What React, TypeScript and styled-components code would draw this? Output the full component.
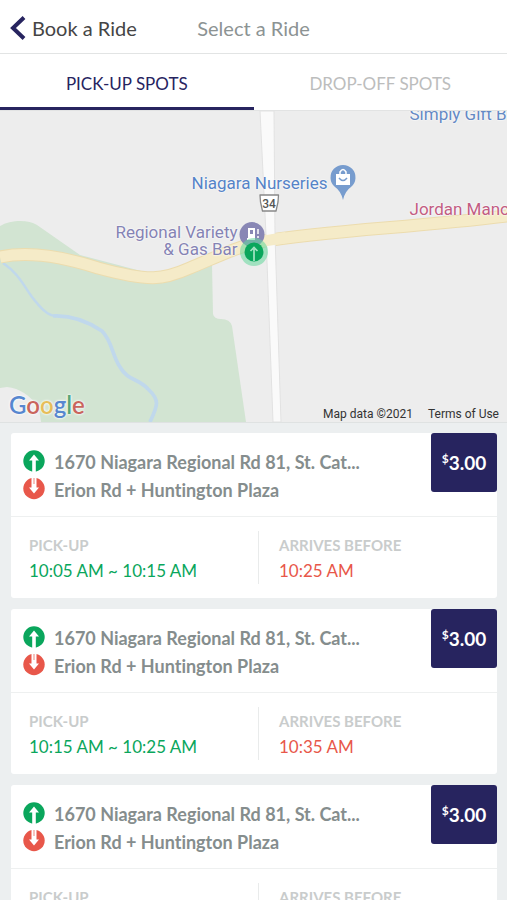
import React from "react";
import styled, { createGlobalStyle } from "styled-components";

const navy = "#27245f";
const green = "#0aa65c";
const red = "#e8574a";

const GlobalStyle = createGlobalStyle`
  * { box-sizing: border-box; }
  body {
    margin: 0;
    background: #eceff0;
    font-family: Lato, sans-serif;
    font-variant-ligatures: none;
  }
  button { font: inherit; border: 0; background: none; padding: 0; cursor: pointer; }
`;

const Screen = styled.div`
  display: flex;
  flex-direction: column;
  height: 100vh;
  overflow: hidden;
`;

const Header = styled.header`
  display: grid;
  grid-template-columns: 1fr auto 1fr;
  align-items: center;
  height: 54px;
  flex: none;
  padding: 2px 10px 0;
  background: #fff;
  border-bottom: 1px solid #e2e4e4;
`;

const BackButton = styled.button`
  display: flex;
  align-items: center;
  gap: 6px;
  justify-self: start;
  font-size: 20px;
  line-height: 28px;
  color: #454545;
`;

const Title = styled.h1`
  margin: 0;
  font-size: 20px;
  line-height: 28px;
  font-weight: 400;
  color: #8c9393;
`;

const Tabs = styled.div`
  display: flex;
  flex: none;
  background: #fff;
`;

const Tab = styled.button<{ $active?: boolean }>`
  flex: 1;
  height: 56px;
  padding-top: 6px;
  font-size: 17px;
  line-height: 24px;
  color: ${(p) => (p.$active ? navy : "#bcbdbd")};
  border-bottom: 3px solid ${(p) => (p.$active ? navy : "transparent")};
`;

const MapArea = styled.section`
  position: relative;
  height: 313px;
  flex: none;
  overflow: hidden;
  background: #ededed;
  border-top: 1px solid #e2e3e3;
  border-bottom: 1px solid #dfe2e2;
`;

const MapDrawing = styled.svg`
  display: block;
  width: 100%;
  height: 100%;
`;

const MapLabel = styled.span<{ $x: number; $y: number; $color: string; $end?: boolean }>`
  position: absolute;
  top: ${(p) => p.$y}px;
  ${(p) => (p.$end ? "right" : "left")}: calc(50% + ${(p) => p.$x}px);
  font: 17px/17px Roboto, sans-serif;
  text-align: right;
  white-space: pre-line;
  width: max-content;
  color: ${(p) => p.$color};
  text-shadow: 0 0 2px #fff, 0 0 2px #fff;
`;

const Logo = styled.span`
  position: absolute;
  left: 9px;
  bottom: 0;
  font: 600 24px/34px Lato, sans-serif;
  text-shadow: 0 0 2px #fff, 0 0 3px #fff;
`;

const Letter = styled.span<{ $color: string }>`
  color: ${(p) => p.$color};
`;

const MapFooter = styled.div`
  position: absolute;
  right: 8px;
  bottom: 0;
  display: flex;
  gap: 15px;
  font: 12px/16px Roboto, sans-serif;
  color: #333;
`;

const TermsLink = styled.a`
  color: inherit;
  text-decoration: none;
`;

const RideList = styled.main`
  display: flex;
  flex-direction: column;
  gap: 11px;
  flex: 1;
  min-height: 0;
  padding: 10px 10px 10px 11px;
  overflow-y: auto;
  scrollbar-width: none;
`;

const Card = styled.article`
  flex: none;
  background: #fff;
  border-radius: 3px;
`;

const CardTop = styled.div`
  display: flex;
  align-items: flex-start;
  justify-content: space-between;
  height: 84px;
  border-bottom: 1px solid #eef0f0;
`;

const Stops = styled.div`
  display: flex;
  flex-direction: column;
  min-width: 0;
  padding: 15px 0 0 12px;
`;

const Stop = styled.div`
  display: flex;
  align-items: center;
  gap: 9px;
  height: 28px;
  font-size: 18px;
  line-height: 28px;
  font-weight: 700;
  color: #858d8d;
  white-space: nowrap;
`;

const Price = styled.button`
  display: flex;
  align-items: center;
  justify-content: center;
  flex: none;
  width: 66px;
  height: 59px;
  border-radius: 3px;
  background: ${navy};
  color: #fff;
  font-size: 19px;
  font-weight: 700;
`;

const Currency = styled.span`
  align-self: flex-start;
  padding-top: 19px;
  font-size: 12px;
  line-height: 14px;
`;

const Times = styled.dl`
  display: grid;
  grid-template-columns: 247px 1fr;
  margin: 0;
  padding: 14px 0;
`;

const TimeCell = styled.div<{ $divided?: boolean }>`
  height: 53px;
  padding-left: ${(p) => (p.$divided ? 20 : 18)}px;
  border-left: ${(p) => (p.$divided ? "1px solid #e9ebeb" : "0")};
`;

const TimeLabel = styled.dt`
  padding-top: 2px;
  font-size: 15px;
  line-height: 24px;
  font-weight: 700;
  color: #c9cccc;
`;

const TimeValue = styled.dd<{ $color: string }>`
  margin: 0;
  font-size: 17px;
  line-height: 28px;
  color: ${(p) => p.$color};
`;

const StopIcon = ({ down }: { down?: boolean }) => (
  <svg width="22" height="28" viewBox="0 0 22 28" aria-hidden="true">
    {down ? (
      <>
        <circle cx="11" cy="12.5" r="10.7" fill={red} />
        <path d="M8.500 1h5V11.500H16L11 17.500L6 11.500H8.500z" fill="#fff" />
        <path d="M11 2v6" stroke={red} strokeWidth="1.200" opacity=".6" />
      </>
    ) : (
      <>
        <circle cx="11" cy="13" r="10.7" fill={green} />
        <path d="M9.200 24V12.500H6L11 6.500l5 6h-3.200V24z" fill="#fff" />
      </>
    )}
  </svg>
);

const MapPicture = () => (
  <MapDrawing viewBox="0 111 507 311" preserveAspectRatio="xMidYMid slice" aria-hidden="true">
    <path d="M0 226C10 220 28 219 37 225L80 255L160 276L212 264L213 314Q214 319 221 319Q230 319 232 326L246 422H41L39 408Q26 389 7 387L0 388Z" fill="#d2e4d2" />
    <path d="M3 263C18 273 24 286 32 297C39 306 47 316 56 316" fill="none" stroke="#c0d8ec" strokeWidth="2.500" />
    <path d="M53 316C72 315 90 323 102 331C112 341 112 355 120 367C128 381 138 378 148 389C160 400 158 405 150 422" fill="none" stroke="#c0d8ec" strokeWidth="3.700" strokeLinejoin="round" />
    <path d="M0 256C28 250 61 255 98 267C150 281 163 279 190 267C221 254 235 247 259 241C330 229 410 227 507 215" transform="translate(0 1)" fill="none" stroke="#ecdcae" strokeWidth="13" />
    <path d="M0 256C28 250 61 255 98 267C150 281 163 279 190 267C221 254 235 247 259 241C330 229 410 227 507 215" transform="translate(0 1)" fill="none" stroke="#f5ebc8" strokeWidth="11" />
    <path d="M260 111L266 235L273 422H281L275 235L274 111Z" fill="#fafafa" stroke="#e2e2e2" />
    <path d="M264 241L286 237.500" stroke="#f5ebc8" strokeWidth="11" />
    <path d="M260 195H278.500L278 202L276 211H262.500L260.500 202Z" fill="#fff" stroke="#888" strokeWidth="1.300" strokeLinejoin="round" />
    <text x="269" y="207.500" textAnchor="middle" fontFamily="Roboto" fontSize="12" fontWeight="500" fill="#555">34</text>
    <path d="M343 200Q341 191 335 187A12.500 12.500 0 1 1 351 187Q345 191 343 200Z" fill="#779cce" />
    <path d="M336 174H350V185H336Z" fill="#fff" />
    <path d="M340 174V172Q343 167 346 172V174" fill="none" stroke="#fff" strokeWidth="1.500" />
    <path d="M339 178Q343 183 347 178" fill="none" stroke="#779cce" strokeWidth="1.500" />
    <circle cx="252" cy="234.500" r="12.500" fill="#8987b5" />
    <path d="M248 228h7v12h-8v-2h1zM250 230v4h3v-4z" fill="#fff" fillRule="evenodd" />
    <path d="M258 229v5M258 236v2" fill="none" stroke="#fff" strokeWidth="1.500" />
    <circle cx="254" cy="252" r="14" fill="#62d79a" opacity=".55" />
    <circle cx="254" cy="252" r="9.500" fill={green} />
    <path d="M254 261V249M250.500 251L254 247.500L257.500 251" fill="none" stroke="#a5e4c4" strokeWidth="1.700" />
  </MapDrawing>
);

const logoLetters = [
  ["G", "#5787cf"],
  ["o", "#c9655d"],
  ["o", "#e6be59"],
  ["g", "#5787cf"],
  ["l", "#57a77a"],
  ["e", "#c9655d"],
];

const rides = [
  { pickup: "10:05 AM ~ 10:15 AM", arrival: "10:25 AM" },
  { pickup: "10:15 AM ~ 10:25 AM", arrival: "10:35 AM" },
  { pickup: "10:25 AM ~ 10:35 AM", arrival: "10:45 AM" },
];

export default function App() {
  return (
    <Screen>
      <GlobalStyle />
      <Header>
        <BackButton>
          <svg width="16" height="24" viewBox="0 0 16 24" aria-hidden="true">
            <path d="M14 1.500L3 12L14 22.500" fill="none" stroke={navy} strokeWidth="4" />
          </svg>
          Book a Ride
        </BackButton>
        <Title>Select a Ride</Title>
      </Header>
      <Tabs role="tablist">
        <Tab role="tab" aria-selected="true" $active>PICK-UP SPOTS</Tab>
        <Tab role="tab" aria-selected="false">DROP-OFF SPOTS</Tab>
      </Tabs>
      <MapArea aria-label="Map">
        <MapPicture />
        <MapLabel $x={156} $y={-5} $color="#6489c4">Simply Gift B</MapLabel>
        <MapLabel $x={-74} $y={64} $color="#5583c7" $end>Niagara Nurseries</MapLabel>
        <MapLabel $x={156} $y={90} $color="#c25d82">Jordan Mano</MapLabel>
        <MapLabel $x={16} $y={113} $color="#8583b4" $end>{"Regional Variety\n& Gas Bar"}</MapLabel>
        <Logo>
          {logoLetters.map(([letter, color], i) => (
            <Letter key={i} $color={color}>{letter}</Letter>
          ))}
        </Logo>
        <MapFooter>
          <span>Map data ©2021</span>
          <TermsLink href="#terms">Terms of Use</TermsLink>
        </MapFooter>
      </MapArea>
      <RideList>
        {rides.map((ride) => (
          <Card key={ride.pickup}>
            <CardTop>
              <Stops>
                <Stop><StopIcon />1670 Niagara Regional Rd 81, St. Cat...</Stop>
                <Stop><StopIcon down />Erion Rd + Huntington Plaza</Stop>
              </Stops>
              <Price><Currency>$</Currency>3.00</Price>
            </CardTop>
            <Times>
              <TimeCell>
                <TimeLabel>PICK-UP</TimeLabel>
                <TimeValue $color={green}>{ride.pickup}</TimeValue>
              </TimeCell>
              <TimeCell $divided>
                <TimeLabel>ARRIVES BEFORE</TimeLabel>
                <TimeValue $color={red}>{ride.arrival}</TimeValue>
              </TimeCell>
            </Times>
          </Card>
        ))}
      </RideList>
    </Screen>
  );
}
